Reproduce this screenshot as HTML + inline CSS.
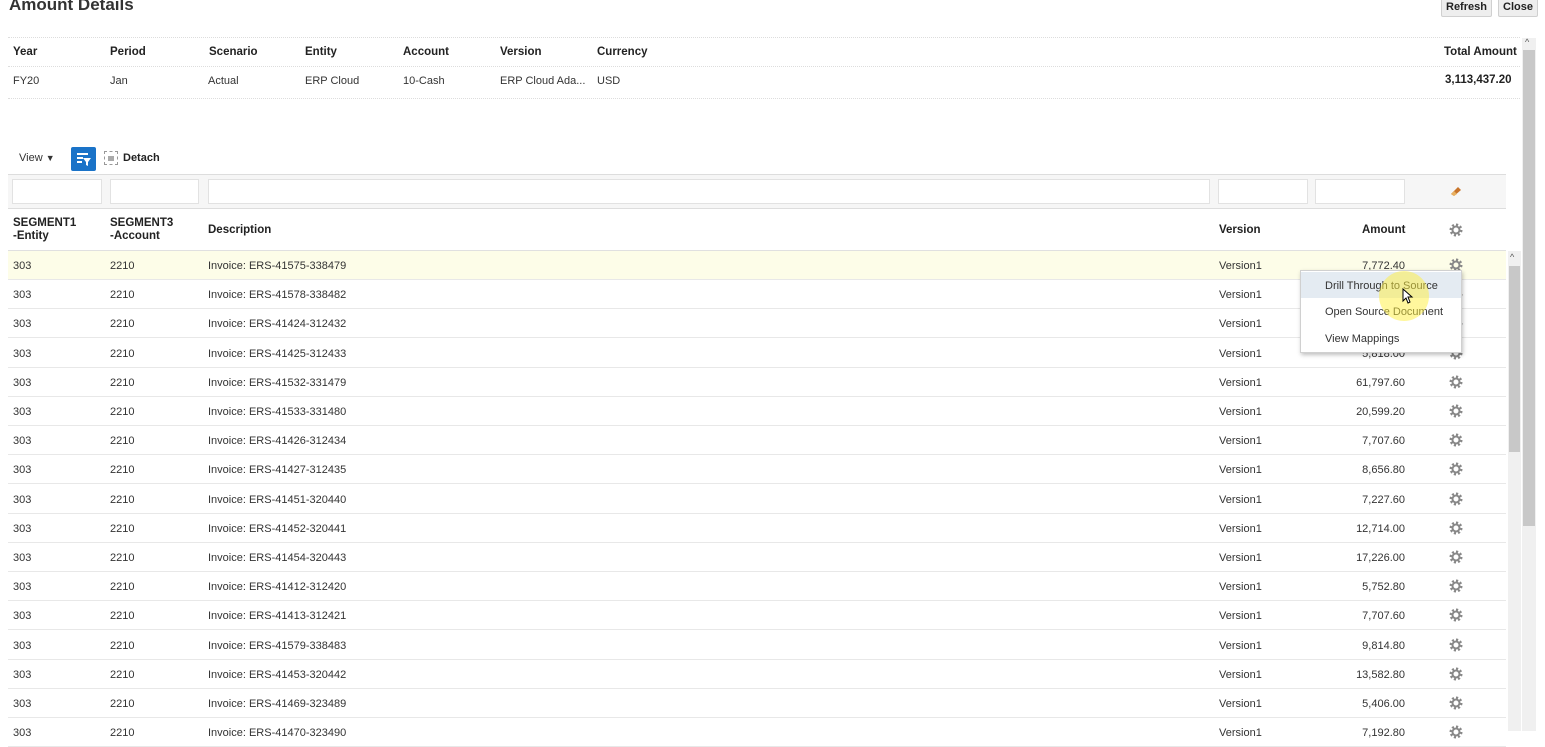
<!DOCTYPE html>
<html><head><meta charset="utf-8"><style>
*{margin:0;padding:0;box-sizing:border-box}
body{width:1545px;height:731px;overflow:hidden;background:#fff;font-family:"Liberation Sans",Arial,sans-serif;color:#333;font-size:11px;position:relative}
.a{position:absolute;white-space:nowrap}
.b{font-weight:bold;color:#222;font-size:11.5px}
.hl{position:absolute;left:8px;width:1512px;height:0;border-top:1px dotted #ddd}
.btn{position:absolute;top:-4px;height:21px;background:#eee;border:1px solid #d0d0d0;border-radius:2px;font-size:11px;font-weight:bold;color:#222;padding:4px 4px 0}
.fb{position:absolute;top:179px;height:25px;border:1px solid #e2e2e2;background:#fff}
.row{position:absolute;left:8px;width:1498px;height:29px;border-bottom:1px solid #e8e8e8}
.row span{position:absolute;top:9px}
.gear{position:absolute;left:1441px;top:7px;width:14px;height:14px}
</style></head><body>
<div class="a" style="left:9px;top:-5px;font-size:17px;font-weight:bold;color:#333">Amount Details</div>
<div class="btn" style="left:1441px">Refresh</div>
<div class="btn" style="left:1498px">Close</div>

<div class="hl" style="top:37px"></div>
<div class="hl" style="top:66px"></div>
<div class="hl" style="top:98px"></div>
<div class="a b" style="left:13px;top:46px">Year</div>
<div class="a b" style="left:110px;top:46px">Period</div>
<div class="a b" style="left:209px;top:46px">Scenario</div>
<div class="a b" style="left:305px;top:46px">Entity</div>
<div class="a b" style="left:403px;top:46px">Account</div>
<div class="a b" style="left:500px;top:46px">Version</div>
<div class="a b" style="left:597px;top:46px">Currency</div>
<div class="a b" style="left:1444px;top:46px">Total Amount</div>
<div class="a" style="left:13px;top:75px">FY20</div>
<div class="a" style="left:110px;top:75px">Jan</div>
<div class="a" style="left:208px;top:75px">Actual</div>
<div class="a" style="left:305px;top:75px">ERP Cloud</div>
<div class="a" style="left:403px;top:75px">10-Cash</div>
<div class="a" style="left:500px;top:75px">ERP Cloud Ada...</div>
<div class="a" style="left:597px;top:75px">USD</div>
<div class="a b" style="left:1445px;top:74px">3,113,437.20</div>

<div class="a" style="left:19px;top:152px">View <span style="font-size:9px">▼</span></div>
<div class="a" style="left:71px;top:147px;width:25px;height:24px;background:#1a73c8;border-radius:2px">
<svg width="25" height="24"><rect x="6" y="6" width="11" height="2" fill="#fff"/><rect x="6" y="10" width="6" height="2" fill="#fff"/><rect x="6" y="14" width="5" height="2" fill="#fff"/><path d="M12 11h8l-3 4v4l-2-1v-3z" fill="#fff"/></svg></div>
<div class="a" style="left:104px;top:151px;width:14px;height:14px;border:1px dashed #999"><div style="margin:4px 3px;width:6px;height:5px;background:#aaa"></div></div>
<div class="a" style="left:123px;top:152px;font-weight:bold;color:#222">Detach</div>

<div class="a" style="left:8px;top:174px;width:1498px;height:35px;background:#f6f6f6;border-top:1px solid #ddd;border-bottom:1px solid #ddd"></div>
<div class="fb" style="left:12px;width:90px"></div>
<div class="fb" style="left:110px;width:89px"></div>
<div class="fb" style="left:208px;width:1002px"></div>
<div class="fb" style="left:1218px;width:90px"></div>
<div class="fb" style="left:1315px;width:90px"></div>
<svg class="a" style="left:1450px;top:186px" width="12" height="10"><path d="M1 8l7-7 3 3-7 6z" fill="#c8742a"/><path d="M1 8l3-3 3 3-3 2z" fill="#e8b060"/></svg>

<div class="a b" style="left:13px;top:217px;line-height:13px">SEGMENT1<br>-Entity</div>
<div class="a b" style="left:110px;top:217px;line-height:13px">SEGMENT3<br>-Account</div>
<div class="a b" style="left:208px;top:224px">Description</div>
<div class="a b" style="left:1219px;top:224px">Version</div>
<div class="a b" style="left:1362px;top:224px">Amount</div>
<svg class="a" style="left:1449px;top:223px" width="14" height="14"><circle cx="7" cy="7" r="5" fill="none" stroke="#888" stroke-width="3" stroke-dasharray="2 1.9"/><circle cx="7" cy="7" r="3.5" fill="none" stroke="#888" stroke-width="2"/></svg>
<div class="hl" style="top:250px;width:1498px;border-top:1px solid #e0e0e0"></div>

<div id="rows"></div>
<script>
var d=[["41575-338479","7,772.40"],["41578-338482",""],["41424-312432",""],["41425-312433","5,818.00"],["41532-331479","61,797.60"],["41533-331480","20,599.20"],["41426-312434","7,707.60"],["41427-312435","8,656.80"],["41451-320440","7,227.60"],["41452-320441","12,714.00"],["41454-320443","17,226.00"],["41412-312420","5,752.80"],["41413-312421","7,707.60"],["41579-338483","9,814.80"],["41453-320442","13,582.80"],["41469-323489","5,406.00"],["41470-323490","7,192.80"]];
var h="";
d.forEach(function(r,i){var t=251+i*29.2;
h+='<div class="row" style="top:'+t+'px;'+(i==0?'background:#fdfde8':'')+'"><span style="left:5px">303</span><span style="left:102px">2210</span><span style="left:200px">Invoice: ERS-'+r[0]+'</span><span style="left:1211px">Version1</span><span style="right:101px">'+r[1]+'</span><svg class="gear" viewBox="0 0 14 14"><circle cx="7" cy="7" r="5" fill="none" stroke="#888" stroke-width="3" stroke-dasharray="2 1.9"/><circle cx="7" cy="7" r="3.5" fill="none" stroke="#888" stroke-width="2"/></svg></div>';});
document.getElementById("rows").innerHTML=h;
</script>

<div class="a" style="left:1508px;top:251px;width:13px;height:480px;background:#f0f0f0"></div>
<div class="a" style="left:1509px;top:266px;width:11px;height:186px;background:#c8c8c8"></div>
<div class="a" style="left:1510px;top:252px;font-size:9px;color:#555">^</div>
<div class="a" style="left:1522px;top:38px;width:14px;height:693px;background:#f0f0f0"></div>
<div class="a" style="left:1523px;top:50px;width:12px;height:476px;background:#c8c8c8"></div>
<div class="a" style="left:1525px;top:37px;font-size:9px;color:#555">^</div>

<div class="a" style="left:1300px;top:270px;width:162px;height:83px;background:#fff;border:1px solid #d0d0d0;box-shadow:1px 2px 4px rgba(0,0,0,.25)">
<div style="position:absolute;left:0;top:1px;width:160px;height:26px;background:#e4ebf2"></div>
<div style="position:absolute;left:24px;top:9px">Drill Through to Source</div>
<div style="position:absolute;left:24px;top:35px">Open Source Document</div>
<div style="position:absolute;left:24px;top:62px">View Mappings</div>
<div style="position:absolute;left:78px;top:0px;width:50px;height:50px;border-radius:50%;background:rgba(255,240,60,.5)"></div>
<svg style="position:absolute;left:101px;top:17px" width="12" height="16"><path d="M1 1v12l3-3 2 5 2-1-2-5h4z" fill="#fff" stroke="#000" stroke-width="1"/></svg>
</div>
</body></html>
